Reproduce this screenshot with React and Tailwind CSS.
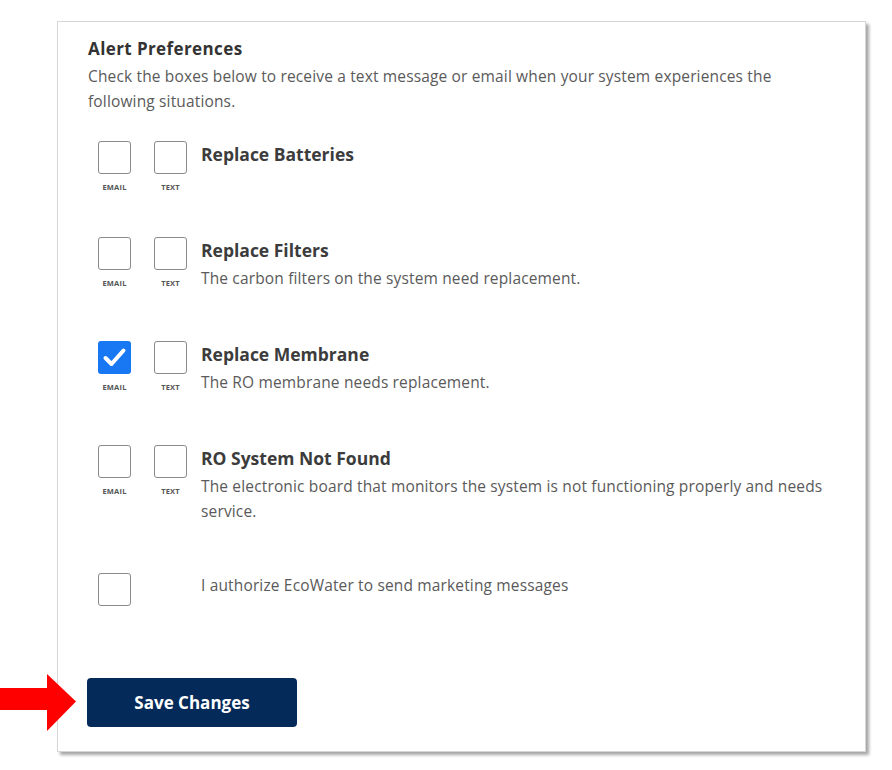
const alerts = [
  { id: "batteries", title: "Replace Batteries", desc: null, h: "h-[96px]" },
  {
    id: "filters",
    title: "Replace Filters",
    desc: "The carbon filters on the system need replacement.",
    h: "h-[104px]",
  },
  {
    id: "membrane",
    title: "Replace Membrane",
    desc: "The RO membrane needs replacement.",
    h: "h-[104px]",
    email: true,
  },
  {
    id: "notfound",
    title: "RO System Not Found",
    desc: "The electronic board that monitors the system is not functioning properly and needs service.",
    h: "h-[128px]",
  },
];

const Box = ({ checked }) =>
  checked ? (
    <div className="w-[33px] h-[33px] rounded-[3px] bg-[#1877f2] flex items-center justify-center">
      <svg width="33" height="33" viewBox="0 0 33 33">
        <polyline
          points="7.5,17 13.5,23 25.5,9.5"
          fill="none"
          stroke="#fff"
          strokeWidth="4"
          strokeLinecap="round"
          strokeLinejoin="round"
        />
      </svg>
    </div>
  ) : (
    <div className="w-[33px] h-[33px] rounded-[3px] border-[1.5px] border-[#8a8a8a] bg-white" />
  );

const Check = ({ label, checked }) => (
  <div className="flex flex-col items-center w-[33px]">
    <Box checked={checked} />
    <span className="mt-[8px] text-[7.5px] leading-[10px] font-bold text-[#555] tracking-[0.2px]">
      {label}
    </span>
  </div>
);

export default function App() {
  return (
    <div
      className="relative w-[892px] h-[770px] bg-white overflow-hidden"
      style={{ fontFamily: '"Open Sans", "Liberation Sans", sans-serif' }}
    >
      <div className="ml-[57px] mt-[21px] w-[809px] h-[731px] border border-[#d6d6d6] bg-white shadow-[3px_3px_3px_rgba(0,0,0,0.35)] pl-[30px] pr-[30px] pt-[15px]">
        <h2 className="text-[17px] leading-[24px] font-bold text-[#333] tracking-[0.4px]">
          Alert Preferences
        </h2>
        <p className="mt-[3px] text-[15.5px] leading-[25px] tracking-[0.15px] text-[#5a5a5a] w-[705px]">
          Check the boxes below to receive a text message or email when your system experiences the
          following situations.
        </p>

        <div className="mt-[27px] pl-[10px]">
          {alerts.map((a) => (
            <div key={a.id} className={`flex ${a.h}`}>
              <div className="flex gap-[23px]">
                <Check label="EMAIL" checked={a.email} />
                <Check label="TEXT" />
              </div>
              <div className="ml-[14px] flex-1">
                <div className="text-[17.5px] leading-[26px] font-bold text-[#3c3c3c]">{a.title}</div>
                {a.desc && (
                  <p className="mt-[3px] text-[15.5px] leading-[25px] tracking-[0.15px] text-[#5a5a5a]">
                    {a.desc}
                  </p>
                )}
              </div>
            </div>
          ))}

          <div className="flex">
            <Box />
            <p className="ml-[70px] text-[15.5px] leading-[25px] tracking-[0.15px] text-[#5a5a5a]">
              I authorize EcoWater to send marketing messages
            </p>
          </div>
        </div>

        <button className="mt-[72px] -ml-px w-[210px] h-[49px] rounded-[4px] bg-[#042a5a] text-white text-[17px] font-bold">
          Save Changes
        </button>
      </div>

      <svg className="absolute left-0 top-[672px]" width="80" height="62" viewBox="0 0 80 62">
        <polygon points="0,16 47,16 47,2 76,29.5 47,59 47,38 0,38" fill="#ff0000" />
      </svg>
    </div>
  );
}
